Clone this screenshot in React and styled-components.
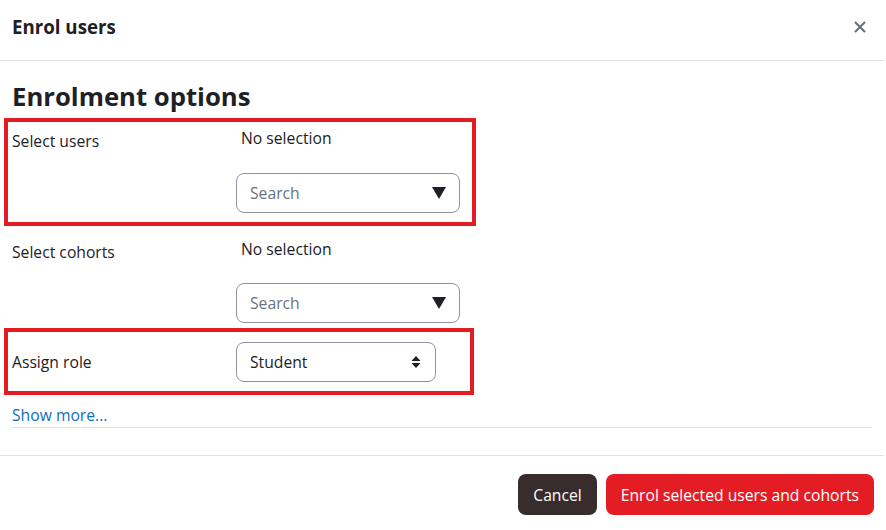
import React from "react";
import styled, { createGlobalStyle } from "styled-components";

const Global = createGlobalStyle`
  html, body { margin: 0; padding: 0; background: #fff; }
  body { font-family: "Open Sans", "Noto Sans", sans-serif; color: #1d2125; }
  * { box-sizing: border-box; }
`;

const Modal = styled.div`
  width: 884px;
  background: #fff;
`;

const Header = styled.div`
  height: 61px;
  display: flex;
  align-items: center;
  justify-content: space-between;
  padding: 0 17px 7px 12px;
  border-bottom: 1px solid #dee2e6;
`;

const Title = styled.h5`
  margin: 0;
  font-size: 18.7px;
  font-weight: 700;
`;

const Close = styled.button`
  border: 0;
  background: none;
  padding: 0;
  width: 14px;
  height: 14px;
  display: flex;
  align-items: center;
  justify-content: center;
  cursor: pointer;
`;

const Body = styled.div`
  padding: 20px 0 0;
  height: 395px;
  border-bottom: 1px solid #dee2e6;
`;

const Heading = styled.h3`
  margin: 0 0 0 12px;
  font-size: 25.7px;
  line-height: 32px;
  font-weight: 700;
`;

const Row = styled.div`
  width: ${(p) => p.$w}px;
  margin: ${(p) => p.$mt || 0}px 0 0 4px;
  border: 4px solid ${(p) => (p.$hl ? "#e31b23" : "transparent")};
  padding: ${(p) => p.$pt}px 0 ${(p) => p.$pb}px 4px;
  display: grid;
  grid-template-columns: 224px 1fr;
  align-items: ${(p) => (p.$center ? "center" : "start")};
`;

const Label = styled.div`
  font-size: 15.7px;
  line-height: 24px;
  padding-top: ${(p) => (p.$center ? 0 : 3)}px;
`;

const Control = styled.div`
  display: flex;
  flex-direction: column;
  gap: ${(p) => p.$gap}px;
`;

const Selection = styled.div`
  font-size: 15.7px;
  line-height: 24px;
  padding-left: 5px;
`;

const Field = styled.div`
  width: ${(p) => p.$w}px;
  height: 40px;
  border: 1px solid #8f959e;
  border-radius: 8px;
  display: flex;
  align-items: center;
  justify-content: space-between;
  padding: 0 ${(p) => p.$pr}px 0 13px;
  font-size: 15.7px;
  color: ${(p) => (p.$muted ? "#6a737b" : "#1d2125")};
`;

const ShowMore = styled.a`
  display: block;
  margin: 8px 12px 0;
  padding-bottom: 0;
  border-bottom: 1px solid #dee2e6;
  font-size: 15.7px;
  line-height: 24px;
  color: #0f6cbf;
  text-decoration: none;
`;

const Footer = styled.div`
  display: flex;
  justify-content: flex-end;
  gap: 9px;
  padding: 18px 10px 0 0;
`;

const Button = styled.button`
  height: 41px;
  border: 0;
  border-radius: 8px;
  padding: 0 15px;
  font-family: inherit;
  font-size: 15.7px;
  color: #fff;
  background: ${(p) => (p.$primary ? "#e41d25" : "#372d2d")};
  cursor: pointer;
`;

const Caret = () => (
  <svg width="14" height="12" viewBox="0 0 14 12">
    <path d="M0 0 H14 L7 12 Z" fill="#1d2125" />
  </svg>
);

const UpDown = () => (
  <svg width="10" height="14" viewBox="0 0 10 14">
    <path d="M5 1 L9.5 6 H0.5 Z M0.5 8 H9.5 L5 13 Z" fill="#1d2125" />
  </svg>
);

export default function App() {
  return (
    <>
      <Global />
      <Modal>
        <Header>
          <Title>Enrol users</Title>
          <Close aria-label="Close">
            <svg width="12" height="12" viewBox="0 0 12 12">
              <path d="M1 1 L11 11 M11 1 L1 11" stroke="#6a737b" strokeWidth="2.2" />
            </svg>
          </Close>
        </Header>
        <Body>
          <Heading>Enrolment options</Heading>
          <Row $hl $w={472} $pt={4} $pb={9} $mt={5}>
            <Label>Select users</Label>
            <Control $gap={23}>
              <Selection>No selection</Selection>
              <Field $w={224} $pr={13} $muted>
                Search
                <Caret />
              </Field>
            </Control>
          </Row>
          <Row $w={472} $pt={7} $pb={1}>
            <Label>Select cohorts</Label>
            <Control $gap={22}>
              <Selection>No selection</Selection>
              <Field $w={224} $pr={13} $muted>
                Search
                <Caret />
              </Field>
            </Control>
          </Row>
          <Row $hl $center $w={470} $pt={10} $pb={9}>
            <Label $center>Assign role</Label>
            <Control $gap={0}>
              <Field $w={200} $pr={14}>
                Student
                <UpDown />
              </Field>
            </Control>
          </Row>
          <ShowMore href="#">Show more...</ShowMore>
        </Body>
        <Footer>
          <Button>Cancel</Button>
          <Button $primary>Enrol selected users and cohorts</Button>
        </Footer>
      </Modal>
    </>
  );
}
